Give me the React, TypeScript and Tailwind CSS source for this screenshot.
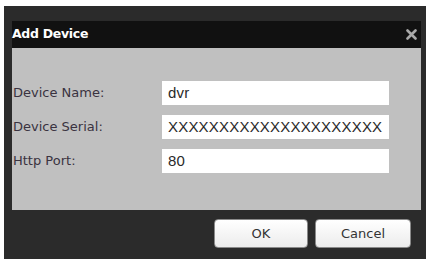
import React from "react";

interface Field {
  label: string;
  value: string;
}

const fields: Field[] = [
  { label: "Device Name:", value: "dvr" },
  { label: "Device Serial:", value: "XXXXXXXXXXXXXXXXXXXXX" },
  { label: "Http Port:", value: "80" },
];

const App: React.FC = () => {
  return (
    <div className="w-[426px] h-[259px] bg-white pt-[6px] pl-[4px] overflow-hidden">
      <div
        className="w-[430px] h-[253px] bg-[#2b2b2b] flex flex-col pt-[15px] pl-[8px] pr-[13px]"
        style={{ fontFamily: "'DejaVu Sans', 'Liberation Sans', sans-serif" }}
      >
        {/* title bar */}
        <div className="h-[27px] bg-[#111111] flex items-center justify-between">
          <span className="text-[12.5px] font-bold text-white tracking-[-0.3px]">
            Add Device
          </span>
          <svg width="11" height="11" viewBox="0 0 11 11" className="mr-[4px]">
            <path
              d="M1.5 1.5 L9.5 9.5 M9.5 1.5 L1.5 9.5"
              stroke="#a8a8a8"
              strokeWidth="2.6"
              strokeLinecap="round"
            />
          </svg>
        </div>

        {/* form */}
        <div className="h-[162px] bg-[#c0c0c0] pt-[33px] pl-[1px] flex flex-col gap-[10px]">
          {fields.map((f) => (
            <div key={f.label} className="flex items-center h-[24px]">
              <span className="w-[149px] text-[13px] text-[#3a3340]">
                {f.label}
              </span>
              <div
                className="w-[227px] h-[24px] bg-white flex items-center pl-[6px] text-[15px] tracking-[0.2px] text-[#2a2a2a]"
                style={{ fontFamily: "'Liberation Sans', Arial, sans-serif" }}
              >
                {f.value}
              </div>
            </div>
          ))}
        </div>

        {/* buttons */}
        <div className="flex justify-end gap-[7px] pt-[9px] pr-[10px]">
          <button className="w-[94px] h-[29px] rounded-[4px] border border-[#8a8a8a] bg-gradient-to-b from-white to-[#ececec] text-[13px] text-[#333]">
            OK
          </button>
          <button className="w-[96px] h-[29px] rounded-[4px] border border-[#8a8a8a] bg-gradient-to-b from-white to-[#ececec] text-[13px] text-[#333]">
            Cancel
          </button>
        </div>
      </div>
    </div>
  );
};

export default App;
